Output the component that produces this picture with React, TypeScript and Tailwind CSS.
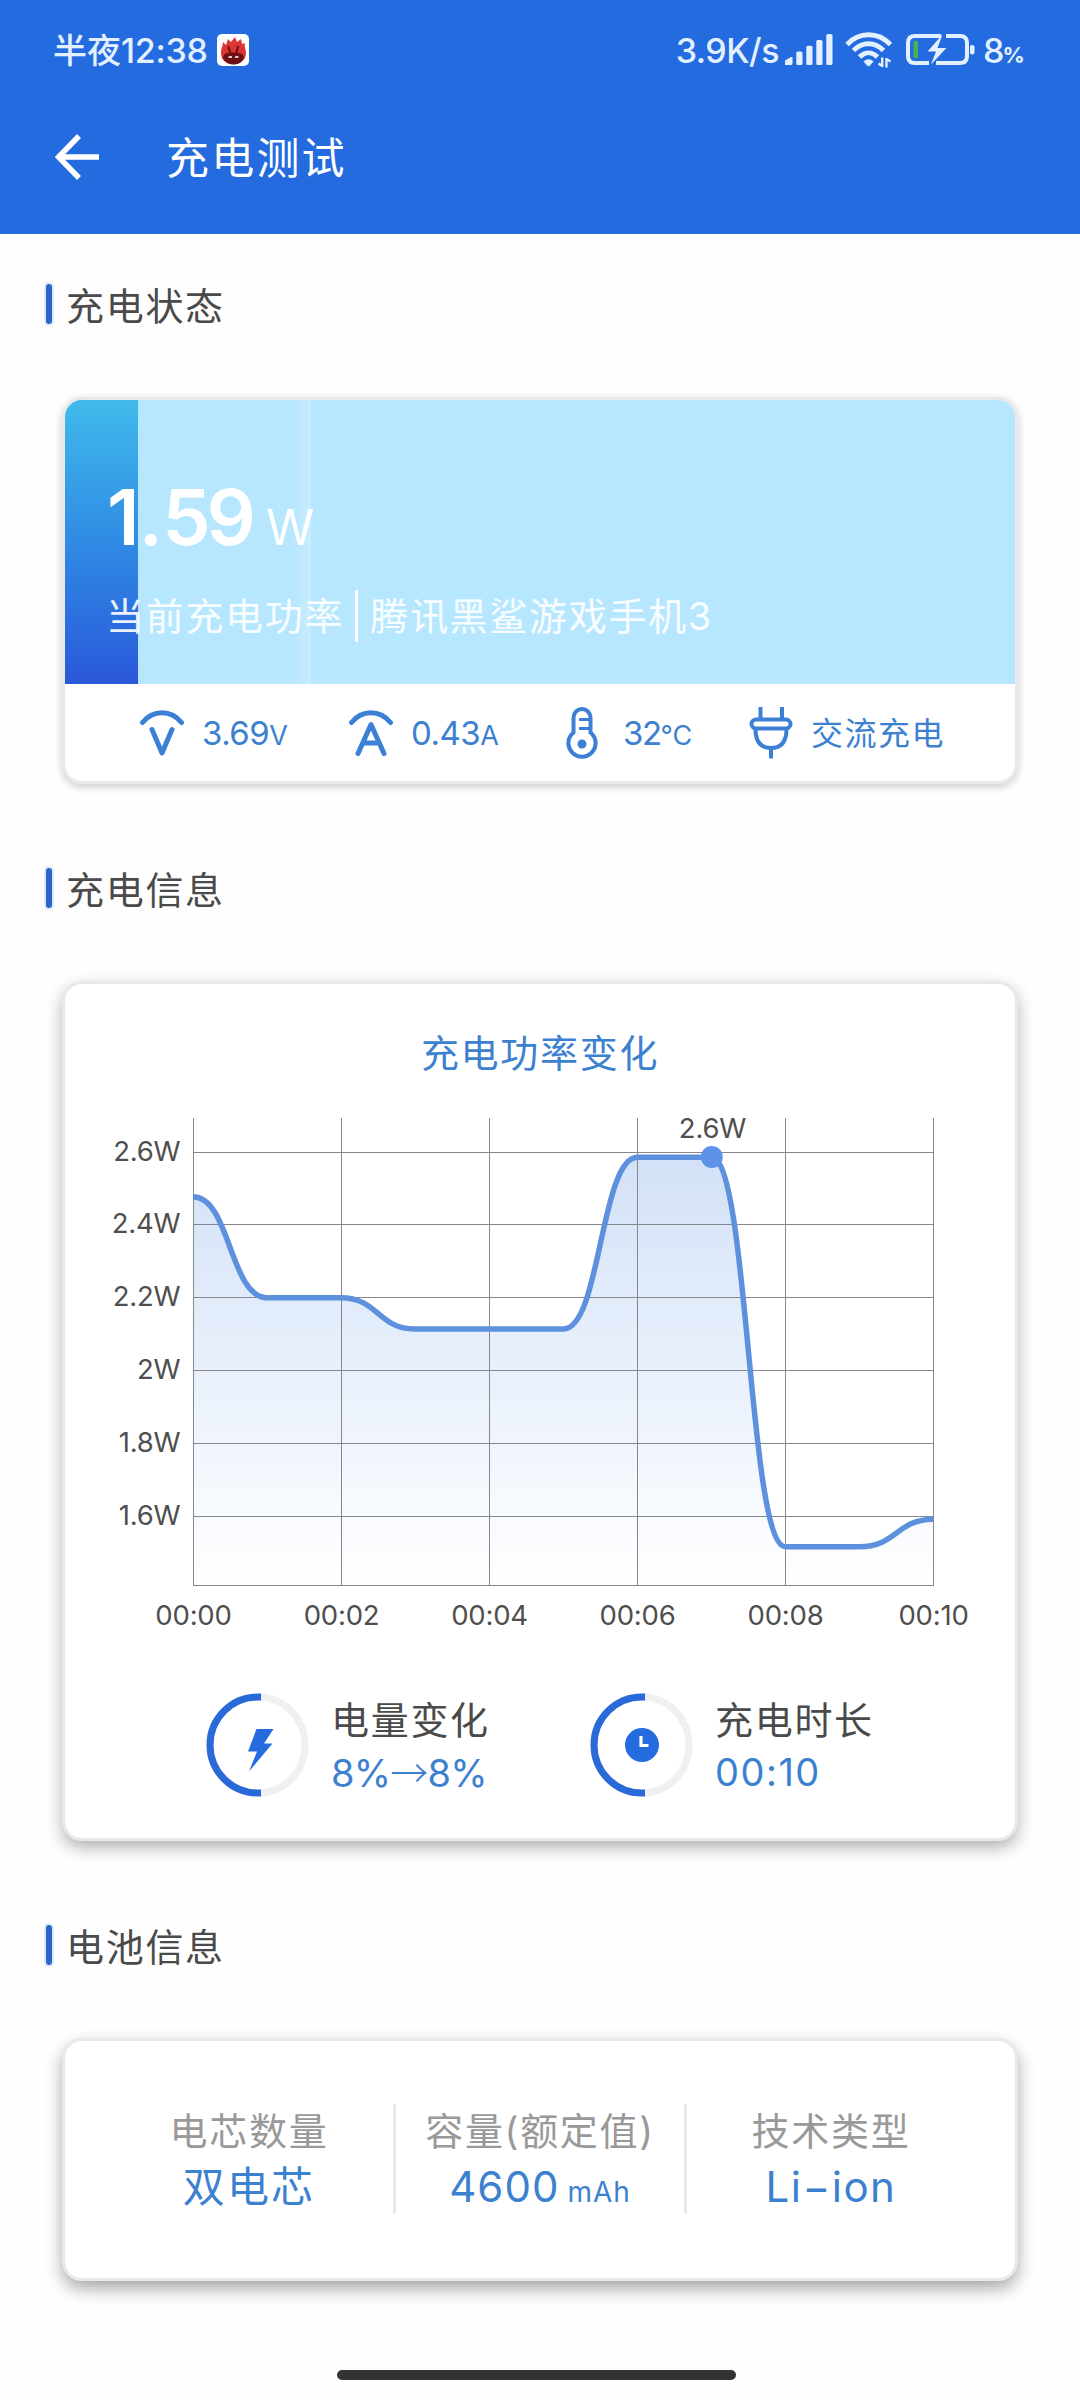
import type { ReactNode } from "react";

const yTicks = [
  { label: "2.6W", y: 1152.5 },
  { label: "2.4W", y: 1224.5 },
  { label: "2.2W", y: 1297.5 },
  { label: "2W", y: 1370.5 },
  { label: "1.8W", y: 1443.5 },
  { label: "1.6W", y: 1516.5 },
];

const xTicks = [
  { label: "00:00", x: 193.5 },
  { label: "00:02", x: 341.5 },
  { label: "00:04", x: 489.5 },
  { label: "00:06", x: 637.5 },
  { label: "00:08", x: 785.5 },
  { label: "00:10", x: 933.5 },
];

const curve =
  "M193 1196.7 C230 1196.7 230 1297.7 267 1297.7 H341 C378 1297.7 378 1329 415 1329 H563.5 C600.5 1329 600.5 1157.3 637.5 1157.3 H711.5 C748.5 1157.3 748.5 1546.7 785.5 1546.7 H859.5 C896.5 1546.7 896.5 1519.3 933.5 1519.3";

function AppBadge() {
  return (
    <svg className="ml-[10px] h-8 w-8" viewBox="0 0 32 32">
      <rect width="32" height="32" rx="5" fill="#fff" />
      <path d="M4 19 C4 14 6 12 6 8 L9 11 L11 5 L14 8 L18 3 L20 8 L24 5 L25 10 L28 9 C27 13 29 15 29 19 C29 26 23 30 16.500 30 C9 30 4 26 4 19Z" fill="#dd3434" />
      <path d="M6 24 C6 19 11 18.500 16.500 18.500 C22 18.500 27 19 27 24 C25 28.500 21 30.500 16.500 30.500 C12 30.500 8 28.500 6 24Z" fill="#6d1015" />
      <path d="M11.500 13 L13 18 M21 13 L19.500 18" stroke="#6d1015" strokeWidth="2.200" strokeLinecap="round" />
      <path d="M11.500 23 h3.500 M18 23 h3.500" stroke="#fff" strokeWidth="1.300" />
    </svg>
  );
}

function SignalIcon() {
  return (
    <svg className="ml-[6px] h-8 w-12" viewBox="0 0 48 32" fill="#e3f0ff">
      <path d="M0 31 V26.500 L6 23 H7.500 V29 Q7.500 31 6 31Z" />
      <rect x="11.300" y="17.500" width="6.200" height="13.500" rx="1.500" />
      <rect x="21.300" y="11.800" width="6.200" height="19.200" rx="1.500" />
      <rect x="31.300" y="6" width="6.200" height="25" rx="1.500" />
      <rect x="41.300" y="0" width="6.200" height="31" rx="1.500" />
    </svg>
  );
}

function WifiIcon() {
  return (
    <svg className="ml-3 h-9 w-[48px]" viewBox="0 0 48 36" fill="none" stroke="#e3f0ff" strokeWidth="4.800">
      <path d="M2 12.500 C14 -0.500 33 -0.500 45.500 12.500" />
      <path d="M8.500 18.500 C17 9.500 30 9.500 38.500 18.500" />
      <path d="M14.500 25 C20 19.500 27 19.500 32.500 25" />
      <path d="M18.500 29.500 Q23.500 25 28.500 29.500 L25 33.500 Q23.500 35 22 33.500Z" fill="#e3f0ff" stroke="none" />
      <path d="M37.200 25.500 V35 M33.500 31.500 L37.200 34 M41.500 35.500 V26 M45.500 29.500 L41.500 27" strokeWidth="2.400" />
    </svg>
  );
}

function BatteryIcon() {
  return (
    <svg className="ml-[13px] h-8 w-[70px]" viewBox="0 0 70 32">
      <path d="M35 2 H9 Q2 2 2 9 V22 Q2 29 9 29 H23 M40 2 H54 Q61 2 61 9 V22 Q61 29 54 29 H30" fill="none" stroke="#e3f0ff" strokeWidth="4" />
      <rect x="7.500" y="7" width="4.500" height="17" rx="1" fill="#42b552" />
      <path d="M36.500 0.500 L21.500 17.500 H30 L25 30.500 L40.500 14 H31.500Z" fill="#e3f0ff" />
      <rect x="64" y="11" width="4.500" height="9.500" rx="2" fill="#e3f0ff" />
    </svg>
  );
}

function SectionTitle({ children }: { children: ReactNode }) {
  return (
    <div className="mb-[73px] ml-[46px] flex h-10 items-center">
      <div className="h-10 w-[6px] rounded-sm bg-[#2e66c8] ring-2 ring-[#dcebfc]" />
      <h2 className="ml-[14px] pt-[3px] text-[38px] leading-10 tracking-[1.700px] text-[#4a4a4a]">{children}</h2>
    </div>
  );
}

function VoltIcon() {
  return (
    <svg className="h-[52px] w-11" viewBox="0 0 44 52" fill="none" stroke="#3c80d6" strokeWidth="5" strokeLinecap="round" strokeLinejoin="round">
      <path d="M2.500 15.500 C13 2.500 31 2.500 41.500 15.500" />
      <path d="M12 22.500 L22 46 L32 22.500" />
    </svg>
  );
}

function AmpIcon() {
  return (
    <svg className="h-[52px] w-11" viewBox="0 0 44 52" fill="none" stroke="#3c80d6" strokeWidth="5" strokeLinecap="round" strokeLinejoin="round">
      <path d="M2.500 15.500 C13 2.500 31 2.500 41.500 15.500" />
      <path d="M9 46.500 L22 17.500 L35 46.500 M15 36 H29" />
    </svg>
  );
}

function ThermometerIcon() {
  return (
    <svg className="h-[52px] w-8" viewBox="0 0 32 52" fill="none" stroke="#3c80d6" strokeWidth="4">
      <path d="M7.500 25.500 V10.500 A8.500 8.500 0 0 1 24.500 10.500 V25.500 A13.600 13.600 0 1 1 7.500 25.500Z" />
      <path d="M13 12.500 H23 M13 21.500 H23" strokeWidth="3" />
      <circle cx="16" cy="37" r="4.500" fill="#3c80d6" stroke="none" />
    </svg>
  );
}

function PlugIcon() {
  return (
    <svg className="h-[52px] w-11" viewBox="0 0 44 52" fill="none" stroke="#3c80d6" strokeWidth="4">
      <path d="M11.500 0 V12 M33 0 V12 M22 41 V51.500" />
      <rect x="2.500" y="12.500" width="39" height="9" rx="4.500" />
      <path d="M6.500 22 C6.500 34 11 41 22 41 C33 41 37.500 34 37.500 22" />
    </svg>
  );
}

function PowerChart() {
  return (
    <svg className="h-[550px] w-[950px] tracking-[-0.200px]" viewBox="65 1100 950 550" fill="#4f4f4f" fontSize="27.500">
      <defs>
        <linearGradient id="area" x1="0" y1="0" x2="0" y2="1">
          <stop offset="0" stopColor="#5b91e3" stopOpacity="0.270" />
          <stop offset="1" stopColor="#5b91e3" stopOpacity="0" />
        </linearGradient>
      </defs>
      <path d={`${curve} V1585.500 H193Z`} fill="url(#area)" />
      {yTicks.map((t) => (
        <g key={t.label}>
          <line x1="193" x2="934" y1={t.y} y2={t.y} stroke="#85878c" />
          <text x="180.500" y={t.y + 8} textAnchor="end">{t.label}</text>
        </g>
      ))}
      <line x1="193" x2="934" y1="1585.500" y2="1585.500" stroke="#85878c" />
      {xTicks.map((t) => (
        <g key={t.label}>
          <line x1={t.x} x2={t.x} y1="1118" y2="1586" stroke="#85878c" />
          <text x={t.x} y="1625" textAnchor="middle">{t.label}</text>
        </g>
      ))}
      <path d={curve} fill="none" stroke="#5d91dd" strokeWidth="5.500" />
      <circle cx="711.800" cy="1157" r="11" fill="#5c92e8" />
      <text x="712.500" y="1138" textAnchor="middle">2.6W</text>
    </svg>
  );
}

function Ring({ children }: { children: ReactNode }) {
  return (
    <svg className="h-[104px] w-[104px]" viewBox="0 0 104 104" fill="none">
      <path d="M52 4 A47 48 0 0 1 52 100" stroke="#f0f0f0" strokeWidth="7" />
      <path d="M55 4 H52 A48 48 0 0 0 52 100 H55" stroke="#296ad8" strokeWidth="7" />
      {children}
    </svg>
  );
}

function Spec({ label, children }: { label: string; children: ReactNode }) {
  return (
    <div className="flex h-[110px] w-[291px] flex-col items-center">
      <p className="h-[54px] text-[38px] leading-[54px] tracking-[1.700px] text-[#999]">{label}</p>
      <p className="h-[56px] text-[42px] leading-[58px] tracking-[1px] text-[#3c80d0]">{children}</p>
    </div>
  );
}

const card = "mx-[62px] rounded-[20px] border-[3px] border-[#e9e9e9] bg-white";

export default function App() {
  return (
    <div className="h-[2400px] w-[1080px] overflow-hidden bg-[#fefefe] font-['Inter','Noto_Sans_CJK_SC',sans-serif]">
      <header className="h-[234px] bg-[#246be0]">
        {/* Status bar */}
        <div className="flex h-[100px] items-center pl-[53px] text-[34px] font-medium text-[#e3f0ff]">
          <span className="w-[154px] whitespace-nowrap">半夜<span className="tracking-[-0.300px]">12:38</span></span>
          <AppBadge />
          <div className="ml-auto flex items-center pr-[57px]">
            <span className="tracking-[-0.500px] whitespace-nowrap">3.9K/s</span>
            <SignalIcon />
            <WifiIcon />
            <BatteryIcon />
            <span className="ml-[7px] flex w-[40px] items-baseline tracking-[-2px]">8<span className="text-[22px] font-bold">%</span></span>
          </div>
        </div>
        <div className="flex h-[114px] items-center pl-[55px]">
          <svg className="h-[46px] w-[46px]" viewBox="0 0 46 46" fill="none" stroke="#fff" strokeWidth="5.500">
            <path d="M24 2 L3.500 23 L24 44 M4 23 H44" />
          </svg>
          <h1 className="ml-[65px] pt-[2px] text-[43px] leading-[60px] tracking-[2.200px] text-white">充电测试</h1>
        </div>
      </header>

      <section className="pt-[50px]">
        <SectionTitle>充电状态</SectionTitle>
        <div className={`${card} h-[387px] overflow-hidden shadow-[0_3px_9px_rgba(0,0,0,0.2)]`}>
          <div className="relative h-[284px] bg-[#b7e7fe]">
            <div className="absolute inset-y-0 left-0 w-[73px] bg-linear-to-b from-[#41baeb] to-[#2b57da]" />
            <div className="absolute inset-y-0 left-[228px] w-[18px] bg-linear-to-r from-transparent to-white/25" />
            <div className="relative pt-[75px] pl-[42px] text-white">
              <div className="flex h-[84px] items-baseline">
                <span className="w-[142px] text-[77px] leading-[84px] font-semibold tracking-[-4px]">
                  <span className="tracking-[-1px]">1.</span>59
                </span>
                <span className="ml-[17px] text-[49px]">W</span>
              </div>
              <div className="mt-[30px] -ml-px flex h-[54px] items-center text-[38px] tracking-[1.700px] text-white/90">
                <span>当前充电功率</span>
                <div className="mr-3 ml-[11px] h-[52px] w-[3px] bg-white" />
                <span>腾讯黑鲨游戏手机3</span>
              </div>
            </div>
          </div>
          <div className="flex h-[97px] items-center pl-[75px] text-[33px] tracking-[-0.500px] text-[#3c80d0]">
            <div className="flex w-[209px] items-center gap-[18px]">
              <VoltIcon />
              <span className="pt-[2px]">3.69<span className="text-[27px]">V</span></span>
            </div>
            <div className="flex w-[217px] items-center gap-[18px]">
              <AmpIcon />
              <span className="pt-[2px]">0.43<span className="text-[27px]">A</span></span>
            </div>
            <div className="flex w-[183px] items-center gap-[25px]">
              <ThermometerIcon />
              <span className="pt-[2px] tracking-[-1.500px]">32<span className="text-[27px]">℃</span></span>
            </div>
            <div className="flex items-center gap-[18px]">
              <PlugIcon />
              <span className="pt-[2px] text-[32px] tracking-[1.500px]">交流充电</span>
            </div>
          </div>
        </div>
      </section>

      <section className="pt-[84px]">
        <SectionTitle>充电信息</SectionTitle>
        <div className={`${card} h-[860px] shadow-[0_7px_17px_-1px_rgba(0,0,0,0.33)]`}>
          <h3 className="pt-[42px] text-center text-[38px] leading-[54px] tracking-[1.700px] text-[#3c80d0]">充电功率变化</h3>
          <div className="mt-5">
            <PowerChart />
          </div>
          <div className="mt-[43px] flex pl-[141px]">
            <div className="flex w-[384px] gap-[21px]">
              <Ring>
                <path d="M50.500 36 H67.500 L58 50.500 H66.500 L43 78.500 L51 58.500 H42Z" fill="#246be0" />
              </Ring>
              <div className="pt-px text-[38px] leading-[52px]">
                <p className="tracking-[1.700px] text-[#4a4a4a]">电量变化</p>
                <p className="h-[52px] leading-[50px] tracking-[-0.800px] whitespace-nowrap text-[#3c80d0]">
                  8%<span className="font-['Noto_Sans_CJK_SC'] font-light">→</span>8%
                </p>
              </div>
            </div>
            <div className="flex gap-[21px]">
              <Ring>
                <circle cx="52" cy="52" r="17" fill="#246be0" />
                <path d="M51 43 V52.500 H58.500" stroke="#fff" strokeWidth="3.200" />
              </Ring>
              <div className="pt-px text-[38px] leading-[52px]">
                <p className="tracking-[1.700px] text-[#4a4a4a]">充电时长</p>
                <p className="tracking-[1.500px] text-[#3c80d0]">00:10</p>
              </div>
            </div>
          </div>
        </div>
      </section>

      <section className="pt-[84px]">
        <SectionTitle>电池信息</SectionTitle>
        <div className={`${card} flex h-[243px] justify-center pt-[63px] shadow-[0_8px_18px_-1px_rgba(0,0,0,0.37)]`}>
          <Spec label="电芯数量"><span className="tracking-[2.200px]">双电芯</span></Spec>
          <div className="-mx-[1.500px] h-[110px] w-[3px] bg-[#e9e9e9]" />
          <Spec label="容量(额定值)">
            4600<span className="ml-2 text-[28px]">mAh</span>
          </Spec>
          <div className="-mx-[1.500px] h-[110px] w-[3px] bg-[#e9e9e9]" />
          <Spec label="技术类型"><span className="tracking-[1.500px]">Li−ion</span></Spec>
        </div>
      </section>

      <div className="mt-[89px] ml-[337px] h-[10px] w-[399px] rounded-full bg-[#333]" />
    </div>
  );
}
